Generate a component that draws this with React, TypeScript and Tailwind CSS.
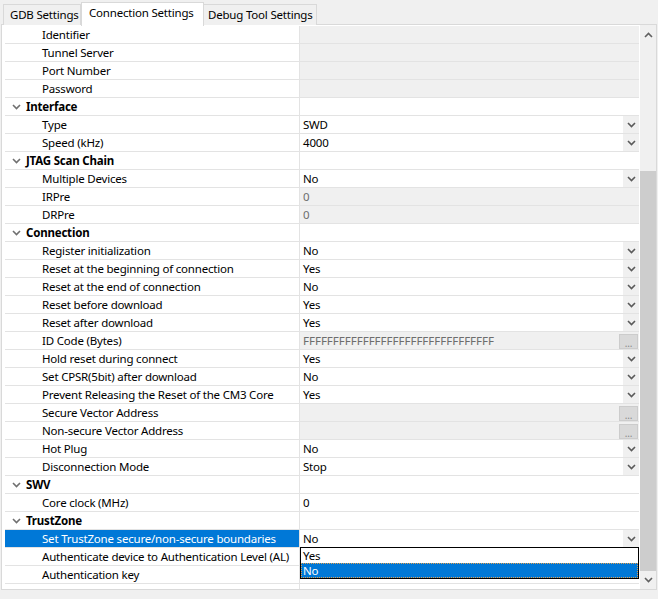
import React from 'react';

type Row = {
  cat?: boolean;
  name: string;
  value?: string;
  kind?: 'disabled' | 'dropdown' | 'text' | 'button';
  selected?: boolean;
};

const rows: Row[] = [
  { name: 'Identifier', kind: 'disabled' },
  { name: 'Tunnel Server', kind: 'disabled' },
  { name: 'Port Number', kind: 'disabled' },
  { name: 'Password', kind: 'disabled' },
  { cat: true, name: 'Interface' },
  { name: 'Type', value: 'SWD', kind: 'dropdown' },
  { name: 'Speed (kHz)', value: '4000', kind: 'dropdown' },
  { cat: true, name: 'JTAG Scan Chain' },
  { name: 'Multiple Devices', value: 'No', kind: 'dropdown' },
  { name: 'IRPre', value: '0', kind: 'disabled' },
  { name: 'DRPre', value: '0', kind: 'disabled' },
  { cat: true, name: 'Connection' },
  { name: 'Register initialization', value: 'No', kind: 'dropdown' },
  { name: 'Reset at the beginning of connection', value: 'Yes', kind: 'dropdown' },
  { name: 'Reset at the end of connection', value: 'No', kind: 'dropdown' },
  { name: 'Reset before download', value: 'Yes', kind: 'dropdown' },
  { name: 'Reset after download', value: 'Yes', kind: 'dropdown' },
  { name: 'ID Code (Bytes)', value: 'FFFFFFFFFFFFFFFFFFFFFFFFFFFFFFFF', kind: 'button' },
  { name: 'Hold reset during connect', value: 'Yes', kind: 'dropdown' },
  { name: 'Set CPSR(5bit) after download', value: 'No', kind: 'dropdown' },
  { name: 'Prevent Releasing the Reset of the CM3 Core', value: 'Yes', kind: 'dropdown' },
  { name: 'Secure Vector Address', kind: 'button' },
  { name: 'Non-secure Vector Address', kind: 'button' },
  { name: 'Hot Plug', value: 'No', kind: 'dropdown' },
  { name: 'Disconnection Mode', value: 'Stop', kind: 'dropdown' },
  { cat: true, name: 'SWV' },
  { name: 'Core clock (MHz)', value: '0', kind: 'text' },
  { cat: true, name: 'TrustZone' },
  { name: 'Set TrustZone secure/non-secure boundaries', value: 'No', kind: 'dropdown', selected: true },
  { name: 'Authenticate device to Authentication Level (AL)', kind: 'text' },
  { name: 'Authentication key', kind: 'text' },
];

const Chevron = ({ up, className }: { up?: boolean; className?: string }) => (
  <svg width="9" height="6" viewBox="0 0 9 6" className={className}>
    <path
      d={up ? 'M1 5 L4.5 1.5 L8 5' : 'M1 1 L4.5 4.5 L8 1'}
      fill="none"
      stroke="currentColor"
      strokeWidth="1.6"
    />
  </svg>
);

function ValueCell({ row }: { row: Row }) {
  if (row.cat) return <div className="flex-1 bg-white" />;
  if (row.kind === 'disabled' || row.kind === 'button') {
    return (
      <div className="flex-1 flex items-center bg-[#f0f0f0] pl-[3px] text-[#6d6d6d]">
        <span className="flex-1 truncate tracking-normal">{row.value}</span>
        {row.kind === 'button' && (
          <div className="w-[19px] h-[15px] mt-[1px] mr-[1px] bg-[#d9d9d9] border border-[#cccccc] text-[#8a8a8a] text-[10px] leading-[16px] text-center">
            ...
          </div>
        )}
      </div>
    );
  }
  if (row.kind === 'dropdown') {
    return (
      <div className="flex-1 flex items-center bg-white pl-[3px]">
        <span className="flex-1">{row.value}</span>
        <div className="w-[16px] h-full flex items-center justify-center bg-[#f0f0f0] text-[#5a5a5a]">
          <Chevron />
        </div>
      </div>
    );
  }
  return <div className="flex-1 flex items-center bg-white pl-[3px]">{row.value}</div>;
}

function GridRow({ row }: { row: Row }) {
  return (
    <div className="flex h-[18px] border-b border-[#e3e3e3]">
      <div
        className={`w-[294px] flex items-center whitespace-nowrap overflow-hidden ${
          row.selected ? 'bg-[#0078d7] text-white' : 'bg-white'
        } ${row.cat ? 'pl-[7px] font-bold' : 'pl-[37px]'}`}
      >
        {row.cat && <Chevron className="mr-[5px] text-[#707070]" />}
        {row.name}
      </div>
      <div className="w-px bg-[#e3e3e3]" />
      <ValueCell row={row} />
    </div>
  );
}

export default function App() {
  return (
    <div
      className="w-[658px] h-[599px] bg-[#f0f0f0] text-[11.5px] tracking-[-0.2px] text-black overflow-hidden"
      style={{ fontFamily: '"Noto Sans", "Open Sans", sans-serif' }}
    >
      {/* Tabs */}
      <div className="flex items-end h-[25px] pl-[3px] relative z-10">
        <div className="w-[78px] h-[21px] pl-[6px] border border-b-0 border-[#d9d9d9] bg-[#f0f0f0] flex items-center">
          GDB Settings
        </div>
        <div className="w-[123px] h-[24px] -mb-px pl-[7px] border border-b-0 border-[#d9d9d9] bg-white flex items-center pb-[3px]">
          Connection Settings
        </div>
        <div className="w-[113px] h-[21px] pl-[4px] border border-b-0 border-l-0 border-[#d9d9d9] bg-[#f0f0f0] flex items-center">
          Debug Tool Settings
        </div>
      </div>

      {/* Panel */}
      <div className="ml-[1px] -mt-px w-[656px] h-[566px] border border-[#d9d9d9] bg-white flex pt-[1px] pl-[3px]">
        <div className="w-[634px] relative flex flex-col">
          <div>
            {rows.map((r, i) => (
              <GridRow key={i} row={r} />
            ))}
          </div>
          <div className="flex flex-1">
            <div className="w-[294px]" />
            <div className="w-px bg-[#e3e3e3]" />
          </div>

          {/* open dropdown list */}
          <div className="absolute left-[295px] top-[521px] w-[339px] h-[32px] border border-black bg-white">
            <div className="h-[15px] pl-[2px] leading-[15px]">Yes</div>
            <div className="h-[15px] pl-[2px] leading-[15px] bg-[#0078d7] text-white outline-1 outline-dotted outline-[#e0a050] -outline-offset-1">
              No
            </div>
          </div>
        </div>
        <div className="w-px bg-white" />
        {/* Scrollbar */}
        <div className="w-[16px] bg-[#f0f0f0] flex flex-col -mt-px">
          <div className="h-[17px] flex items-center justify-center text-[#606060] pt-[2px]">
            <Chevron up />
          </div>
          <div className="h-[129px]" />
          <div className="h-[400px] bg-[#cdcdcd]" />
          <div className="flex-1 flex items-center justify-center text-[#606060]">
            <Chevron />
          </div>
        </div>
      </div>
    </div>
  );
}
